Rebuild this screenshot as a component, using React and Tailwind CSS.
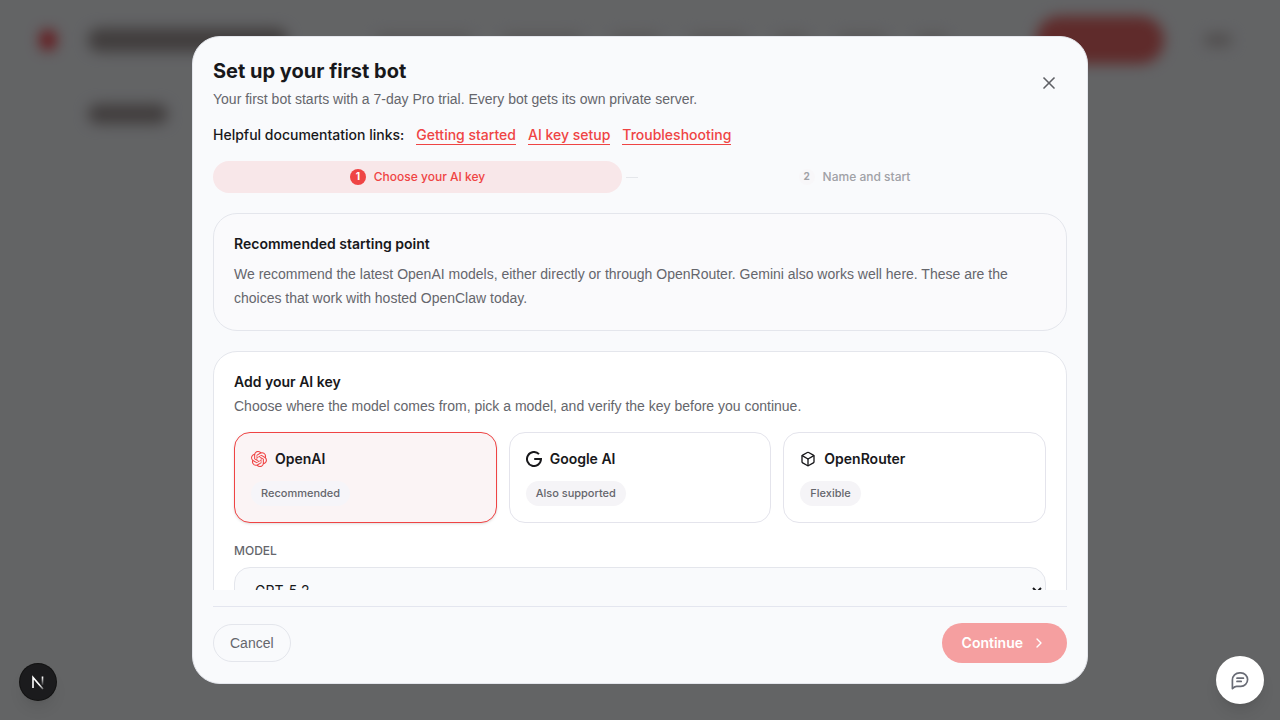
import { useState } from 'react'
import { Box, ChevronRight, X } from 'lucide-react'
import { SiOpenai } from 'react-icons/si'

function GoogleIcon({ className }) {
  return (
    <svg viewBox="0 0 16 16" className={className} fill="none" stroke="currentColor" strokeWidth="2">
      <path d="M13 3.100A7 7 0 1 0 15 8.100H8.200" />
    </svg>
  )
}

const docLinks = ['Getting started', 'AI key setup', 'Troubleshooting'];

const providers = [
  { id: 'openai', name: 'OpenAI', tag: 'Recommended', icon: SiOpenai },
  { id: 'google', name: 'Google AI', tag: 'Also supported', icon: GoogleIcon },
  { id: 'openrouter', name: 'OpenRouter', tag: 'Flexible', icon: Box },
];

const navWidths = ['w-24', 'w-20', 'w-12', 'w-14', 'w-8', 'w-12', 'w-8'];

// Dashboard behind the dialog, only ever seen out of focus
function Backdrop() {
  return (
    <div aria-hidden="true" className="min-h-screen bg-[#f7f9fd]">
      <div className="blur-[7px]">
        <div className="flex h-20 items-center pr-12 pl-10">
          <div className="h-5 w-4 rounded-full bg-red-500"></div>
          <div className="ml-8 h-6 w-50 rounded-full bg-[#a39a9a]"></div>
          <div className="ml-22 flex flex-1 items-center justify-between pr-22">
            {navWidths.map((width, i) => (
              <div key={i} className={`h-3 rounded-full bg-[#dcd7d7] ${width}`}></div>
            ))}
          </div>
          <div className="h-12 w-32 rounded-full bg-[#ed6b6b]"></div>
          <div className="ml-10 h-3 w-7 rounded-full bg-[#c8c0c0]"></div>
        </div>
        <div className="px-22 pt-6">
          <div className="h-5 w-20 rounded-full bg-[#a39a9a]"></div>
        </div>
      </div>
    </div>
  )
}

function Steps() {
  return (
    <ol className="mt-4 flex gap-1 text-xs font-medium">
      <li className="flex flex-1 items-center gap-1">
        <div className="flex h-8 flex-1 items-center justify-center gap-2 rounded-full bg-[#f8e7e9] text-[#ef4444]">
          <span className="flex size-4 items-center justify-center rounded-full bg-[#ef4444] text-[10px] font-bold text-white">1</span>
          Choose your AI key
        </div>
        <div className="h-px w-3 bg-[#e5e7eb]"></div>
      </li>
      <li className="flex h-8 flex-1 items-center justify-center gap-2 text-[#a0a1a6]">
        <span className="flex size-4 items-center justify-center rounded-full bg-[#f8f7f9] text-[10px] font-bold">2</span>
        Name and start
      </li>
    </ol>
  )
}

function ProviderCard({ provider, selected, onSelect }) {
  const Icon = provider.icon;

  return (
    <button
      type="button"
      aria-pressed={selected}
      onClick={onSelect}
      className={`rounded-2xl border p-4 text-left ${selected ? 'border-[#ef4444] bg-[#fbf4f5] shadow-sm' : 'border-[#e4e4ec] bg-white'}`}
    >
      <span className="flex items-center gap-2 text-sm font-semibold text-[#18181b]">
        <Icon className={`size-4 ${selected ? 'text-[#ef4444]' : ''}`} />
        {provider.name}
      </span>
      <span className={`mt-3 inline-flex h-[25px] items-center rounded-full px-2.5 text-[11px] font-medium text-[#65666c] ${selected ? 'bg-[#f6f5f9]' : 'bg-[#f5f4f7]'}`}>
        {provider.tag}
      </span>
    </button>
  )
}

function SetupDialog() {
  const [provider, setProvider] = useState('openai');

  return (
    <div
      role="dialog"
      aria-modal="true"
      aria-labelledby="setup-title"
      className="flex max-h-[90vh] w-full max-w-4xl flex-col rounded-[28px] border border-[#e4e6ec] bg-[#f9fafc] p-5"
    >
      <div className="flex items-center justify-between">
        <div>
          <h2 id="setup-title" className="text-xl font-bold text-[#18181b]">Set up your first bot</h2>
          <p className="mt-1 font-['Liberation_Sans',sans-serif] text-sm text-[#65666c]">Your first bot starts with a 7-day Pro trial. Every bot gets its own private server.</p>
        </div>
        <button type="button" aria-label="Close" className="flex size-9 items-center justify-center rounded-full text-[#5f6065]">
          <X className="size-5" strokeWidth={2} />
        </button>
      </div>

      <div className="mt-4 flex flex-wrap gap-3 text-sm font-medium">
        <span className="text-[#18181b]">Helpful documentation links:</span>
        {docLinks.map((label) => (
          <a key={label} href="#" className="h-5 border-b border-[#ef4444] text-[#ef4444]">{label}</a>
        ))}
      </div>

      <Steps />

      <div className="mt-5 min-h-0 flex-1 overflow-y-auto [scrollbar-width:none]">
        <section className="rounded-3xl border border-[#e4e6ec] bg-[#fafafc] p-5">
          <h3 className="text-sm font-semibold text-[#18181b]">Recommended starting point</h3>
          <p className="mt-2 font-['Liberation_Sans',sans-serif] text-sm leading-6 text-[#65666c]">
            We recommend the latest OpenAI models, either directly or through OpenRouter. Gemini also works well here. These are the choices that work with hosted OpenClaw today.
          </p>
        </section>

        <section className="mt-5 rounded-3xl border border-[#e4e6ec] bg-white p-5">
          <h3 className="text-sm font-semibold text-[#18181b]">Add your AI key</h3>
          <p className="mt-1 font-['Liberation_Sans',sans-serif] text-sm text-[#65666c]">Choose where the model comes from, pick a model, and verify the key before you continue.</p>

          <div className="mt-4 grid grid-cols-3 gap-3">
            {providers.map((item) => (
              <ProviderCard
                key={item.id}
                provider={item}
                selected={item.id === provider}
                onSelect={() => setProvider(item.id)}
              />
            ))}
          </div>

          <label htmlFor="model" className="mt-5 block text-xs font-medium text-[#65666c] uppercase">Model</label>
          <select id="model" className="mt-2 h-[46px] w-full rounded-2xl border border-[#e4e6ec] bg-[#f9fafc] px-4 text-sm text-[#18181b]">
            <option>GPT-5.2</option>
          </select>
        </section>
      </div>

      <div className="mt-4 flex items-center justify-between border-t border-[#e4e6ef] pt-4">
        <button type="button" className="h-[38px] rounded-full border border-[#e4e6ec] px-4 font-['Liberation_Sans',sans-serif] text-sm text-[#65666c]">Cancel</button>
        <button type="button" className="flex h-10 items-center gap-2 rounded-full bg-[#f59fa0] px-5 text-sm font-semibold text-white">
          Continue
          <ChevronRight className="size-4" />
        </button>
      </div>
    </div>
  )
}

function DevBadge() {
  return (
    <button type="button" aria-label="Open developer tools" className="fixed bottom-5 left-5 flex size-9 items-center justify-center rounded-full bg-[#1b1b1d] shadow-lg ring-1 ring-[#111]">
      <svg viewBox="0 0 36 36" className="size-9" fill="none" strokeWidth="1.6">
        <defs>
          <linearGradient id="mark-stem" x1="0" y1="13" x2="0" y2="22" gradientUnits="userSpaceOnUse">
            <stop offset="0" stopColor="#fff" />
            <stop offset="1" stopColor="#fff" stopOpacity="0" />
          </linearGradient>
          <linearGradient id="mark-diagonal" x1="18" y1="18" x2="24" y2="26" gradientUnits="userSpaceOnUse">
            <stop offset="0.3" stopColor="#fff" />
            <stop offset="1" stopColor="#fff" stopOpacity="0.2" />
          </linearGradient>
        </defs>
        <path d="M13 24V13.500l10 11.500" stroke="url(#mark-diagonal)" />
        <path d="M22.500 12.500v8.500" stroke="url(#mark-stem)" />
      </svg>
    </button>
  )
}

function ChatButton() {
  return (
    <button type="button" aria-label="Open chat" className="fixed right-4 bottom-4 flex size-12 items-center justify-center rounded-full bg-white text-[#696c76] shadow-lg">
      <svg viewBox="0 0 24 24" className="size-6" fill="none" stroke="currentColor" strokeWidth="1.7" strokeLinecap="round" strokeLinejoin="round">
        <path d="M4.400 20.600V12a7.200 7.200 0 0 1 7.200-7.200h1.200a6.800 6.800 0 0 1 0 13.600H8.600c-1.600 0-2.600.8-4.200 2.200Z" />
        <path d="M9 10.200h6.400M9 13.400h4.200" />
      </svg>
    </button>
  )
}

export default function App() {
  return (
    <div className="font-[Inter,sans-serif]">
      <Backdrop />
      <div className="fixed inset-0 flex items-center justify-center bg-black/60 p-4">
        <SetupDialog />
      </div>
      <DevBadge />
      <ChatButton />
    </div>
  )
}
